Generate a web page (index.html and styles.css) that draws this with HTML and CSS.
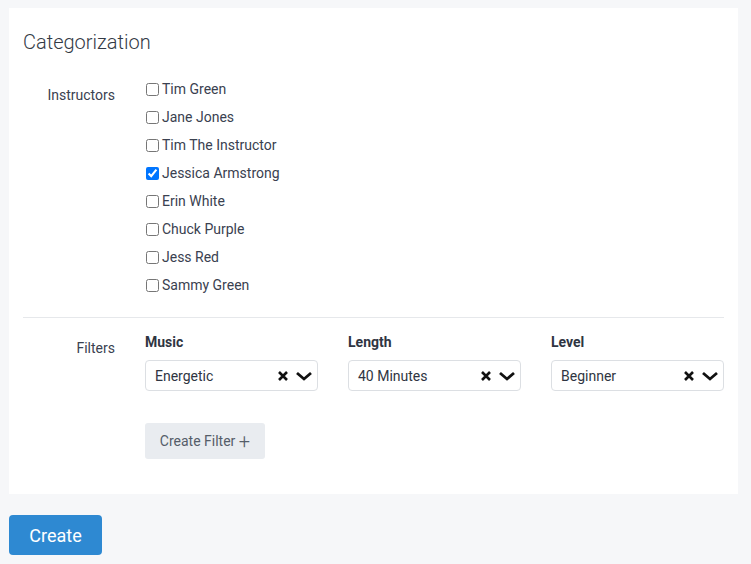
FILE: index.html
```html
<!DOCTYPE html>
<html lang="en">
<head>
    <meta charset="UTF-8">
    <meta name="viewport" content="width=device-width, initial-scale=1.0">
    <title>Categorization</title>
    <link rel="stylesheet" href="styles.css">
</head>
<body>
    <div class="card">
        <h2>Categorization</h2>

        <!-- Instructors -->
        <div class="field">
            <div class="field-label">Instructors</div>
            <div class="checks">
                <label class="check"><input type="checkbox"> Tim Green</label>
                <label class="check"><input type="checkbox"> Jane Jones</label>
                <label class="check"><input type="checkbox"> Tim The Instructor</label>
                <label class="check"><input type="checkbox" checked> Jessica Armstrong</label>
                <label class="check"><input type="checkbox"> Erin White</label>
                <label class="check"><input type="checkbox"> Chuck Purple</label>
                <label class="check"><input type="checkbox"> Jess Red</label>
                <label class="check"><input type="checkbox"> Sammy Green</label>
            </div>
        </div>

        <hr class="divider">

        <!-- Filters -->
        <div class="field">
            <div class="field-label">Filters</div>
            <div>
                <div class="filters">
                    <div class="filter">
                        <div class="filter-title">Music</div>
                        <div class="select">
                            <span>Energetic</span>
                            <span class="icons">
                                <svg width="12" height="12" viewBox="0 0 12 12"><path d="M2 2l8 8M10 2l-8 8" stroke="#111" stroke-width="2.6" fill="none"/></svg>
                                <svg width="18" height="12" viewBox="0 0 18 12"><path d="M2 3l7 6 7-6" stroke="#111" stroke-width="2.8" fill="none"/></svg>
                            </span>
                        </div>
                    </div>
                    <div class="filter">
                        <div class="filter-title">Length</div>
                        <div class="select">
                            <span>40 Minutes</span>
                            <span class="icons">
                                <svg width="12" height="12" viewBox="0 0 12 12"><path d="M2 2l8 8M10 2l-8 8" stroke="#111" stroke-width="2.6" fill="none"/></svg>
                                <svg width="18" height="12" viewBox="0 0 18 12"><path d="M2 3l7 6 7-6" stroke="#111" stroke-width="2.8" fill="none"/></svg>
                            </span>
                        </div>
                    </div>
                    <div class="filter">
                        <div class="filter-title">Level</div>
                        <div class="select">
                            <span>Beginner</span>
                            <span class="icons">
                                <svg width="12" height="12" viewBox="0 0 12 12"><path d="M2 2l8 8M10 2l-8 8" stroke="#111" stroke-width="2.6" fill="none"/></svg>
                                <svg width="18" height="12" viewBox="0 0 18 12"><path d="M2 3l7 6 7-6" stroke="#111" stroke-width="2.8" fill="none"/></svg>
                            </span>
                        </div>
                    </div>
                </div>
                <button class="btn-light">Create Filter <span class="plus">+</span></button>
            </div>
        </div>
    </div>

    <button class="btn-primary">Create</button>
</body>
</html>
```

FILE: styles.css
```css
body {
    font-family: Roboto, "Liberation Sans", sans-serif;
    background-color: #f6f7f9;
    color: #3a4150;
    margin: 0;
    padding: 8px 13px 0 9px;
    font-size: 14px;
}
.card {
    background-color: #fff;
    padding: 20px 14px 35px 14px;
}
h2 {
    margin: 0 0 23px 0;
    font-size: 20px;
    font-weight: 300;
    line-height: 28px;
    color: #333a45;
}
.field {
    display: grid;
    grid-template-columns: 92px 1fr;
    column-gap: 30px;
}
.field-label {
    text-align: right;
    line-height: 20px;
    padding-top: 6px;
    color: #3a4150;
}
.checks {
    display: flex;
    flex-direction: column;
    gap: 8px;
}
.check {
    display: flex;
    align-items: center;
    line-height: 20px;
    gap: 3px;
}
.check input {
    margin: 0 0 0 1px;
    width: 13px;
    height: 13px;
}
.divider {
    border: none;
    border-top: 1px solid #e6e8eb;
    margin: 22px 0 14px 0;
}
.filters {
    display: grid;
    grid-template-columns: repeat(3, 173px);
    column-gap: 30px;
}
.filter-title {
    font-weight: bold;
    line-height: 20px;
    margin-bottom: 8px;
    color: #2f3542;
}
.select {
    display: flex;
    align-items: center;
    justify-content: space-between;
    height: 31px;
    box-sizing: border-box;
    border: 1px solid #dcdfe3;
    border-radius: 4px;
    padding: 0 4px 0 9px;
    color: #2f3542;
}
.icons {
    display: flex;
    align-items: center;
    gap: 6px;
}
.icons svg {
    display: block;
}
.btn-light {
    margin-top: 32px;
    height: 36px;
    width: 120px;
    border: none;
    border-radius: 3px;
    background-color: #e9ecf0;
    color: #555d69;
    font-family: inherit;
    font-size: 14px;
    padding: 0;
}
.plus {
    font-size: 20px;
    font-weight: 300;
    vertical-align: -2px;
}
.btn-primary {
    margin-top: 21px;
    width: 93px;
    height: 40px;
    border: none;
    border-radius: 4px;
    background-color: #2e89d2;
    color: #fff;
    font-family: inherit;
    font-size: 18px;
}
```
